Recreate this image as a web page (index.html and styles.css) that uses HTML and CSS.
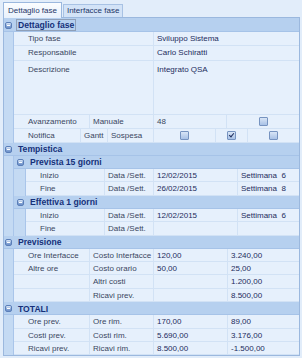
FILE: index.html
```html
<!DOCTYPE html>
<html lang="it">
<head>
    <meta charset="UTF-8">
    <title>Dettaglio fase</title>
    <link rel="stylesheet" href="styles.css">
</head>
<body>
    <div class="tabs">
        <div class="tab active">Dettaglio fase</div>
        <div class="tab">Interfacce fase</div>
    </div>

    <div class="grid">
        <!-- Dettaglio fase -->
        <div class="ghead first"><span class="toggle"></span><span class="gtitle focus">Dettaglio fase</span></div>
        <div class="gbody">
            <div class="strip"></div>
            <div class="rows">
                <div class="row h14"><div class="cell lbl" style="width:140px">Tipo fase</div><div class="cell grow">Sviluppo Sistema</div></div>
                <div class="row h15"><div class="cell lbl" style="width:140px">Responsabile</div><div class="cell grow">Carlo Schiratti</div></div>
                <div class="row tall"><div class="cell lbl" style="width:140px">Descrizione</div><div class="cell grow">Integrato QSA</div></div>
                <div class="row h14">
                    <div class="cell lbl" style="width:76px">Avanzamento</div>
                    <div class="cell" style="width:64px">Manuale</div>
                    <div class="cell" style="width:73px">48</div>
                    <div class="cell grow center"><span class="check"></span></div>
                </div>
                <div class="row h135">
                    <div class="cell lbl" style="width:67px">Notifica</div>
                    <div class="cell" style="width:27px">Gantt</div>
                    <div class="cell" style="width:46px">Sospesa</div>
                    <div class="cell center" style="width:62px"><span class="check"></span></div>
                    <div class="cell center" style="width:32px"><span class="check on"></span></div>
                    <div class="cell grow center"><span class="check"></span></div>
                </div>
            </div>
        </div>

        <!-- Tempistica -->
        <div class="ghead"><span class="toggle"></span><span class="gtitle">Tempistica</span></div>
        <div class="gbody">
            <div class="strip"></div>
            <div class="rows">
                <div class="ghead sub"><span class="toggle"></span><span class="gtitle">Prevista 15 giorni</span></div>
                <div class="gbody">
                    <div class="strip sub"></div>
                    <div class="rows">
                        <div class="row">
                            <div class="cell lbl" style="width:79px">Inizio</div>
                            <div class="cell" style="width:49px">Data /Sett.</div>
                            <div class="cell val" style="width:84px">12/02/2015</div>
                            <div class="cell val grow">Settimana&nbsp; 6</div>
                        </div>
                        <div class="row">
                            <div class="cell lbl" style="width:79px">Fine</div>
                            <div class="cell" style="width:49px">Data /Sett.</div>
                            <div class="cell val" style="width:84px">26/02/2015</div>
                            <div class="cell val grow">Settimana&nbsp; 8</div>
                        </div>
                    </div>
                </div>
                <div class="ghead sub"><span class="toggle"></span><span class="gtitle">Effettiva 1 giorni</span></div>
                <div class="gbody">
                    <div class="strip sub"></div>
                    <div class="rows">
                        <div class="row">
                            <div class="cell lbl" style="width:79px">Inizio</div>
                            <div class="cell" style="width:49px">Data /Sett.</div>
                            <div class="cell val" style="width:84px">12/02/2015</div>
                            <div class="cell val grow">Settimana&nbsp; 6</div>
                        </div>
                        <div class="row">
                            <div class="cell lbl" style="width:79px">Fine</div>
                            <div class="cell" style="width:49px">Data /Sett.</div>
                            <div class="cell val" style="width:84px"></div>
                            <div class="cell val grow"></div>
                        </div>
                    </div>
                </div>
            </div>
        </div>

        <!-- Previsione -->
        <div class="ghead"><span class="toggle"></span><span class="gtitle">Previsione</span></div>
        <div class="gbody">
            <div class="strip"></div>
            <div class="rows">
                <div class="row">
                    <div class="cell lbl" style="width:76px">Ore Interfacce</div>
                    <div class="cell" style="width:64px">Costo Interfacce</div>
                    <div class="cell val" style="width:74px">120,00</div>
                    <div class="cell val grow">3.240,00</div>
                </div>
                <div class="row">
                    <div class="cell lbl" style="width:76px">Altre ore</div>
                    <div class="cell" style="width:64px">Costo orario</div>
                    <div class="cell val" style="width:74px">50,00</div>
                    <div class="cell val grow">25,00</div>
                </div>
                <div class="row">
                    <div class="cell lbl" style="width:76px"></div>
                    <div class="cell" style="width:64px">Altri costi</div>
                    <div class="cell val" style="width:74px"></div>
                    <div class="cell val grow">1.200,00</div>
                </div>
                <div class="row">
                    <div class="cell lbl" style="width:76px"></div>
                    <div class="cell" style="width:64px">Ricavi prev.</div>
                    <div class="cell val" style="width:74px"></div>
                    <div class="cell val grow">8.500,00</div>
                </div>
            </div>
        </div>

        <!-- Totali -->
        <div class="ghead"><span class="toggle"></span><span class="gtitle">TOTALI</span></div>
        <div class="gbody">
            <div class="strip"></div>
            <div class="rows">
                <div class="row">
                    <div class="cell lbl" style="width:76px">Ore prev.</div>
                    <div class="cell" style="width:64px">Ore rim.</div>
                    <div class="cell val" style="width:74px">170,00</div>
                    <div class="cell val grow">89,00</div>
                </div>
                <div class="row">
                    <div class="cell lbl" style="width:76px">Costi prev.</div>
                    <div class="cell" style="width:64px">Costi rim.</div>
                    <div class="cell val" style="width:74px">5.690,00</div>
                    <div class="cell val grow">3.176,00</div>
                </div>
                <div class="row">
                    <div class="cell lbl" style="width:76px">Ricavi prev.</div>
                    <div class="cell" style="width:64px">Ricavi rim.</div>
                    <div class="cell val" style="width:74px">8.500,00</div>
                    <div class="cell val grow">-1.500,00</div>
                </div>
            </div>
        </div>
    </div>
</body>
</html>
```

FILE: styles.css
```css
body {
    margin: 0;
    background: #e2edfa;
    font-family: "Liberation Sans", Arial, sans-serif;
    font-size: 8px;
    color: #3a4660;
}

.tabs {
    display: flex;
    align-items: flex-end;
    height: 17px;
    padding-left: 3px;
}

.tab {
    height: 12px;
    line-height: 12px;
    padding: 0 3px;
    margin-right: 1px;
    border: 1px solid #a8c2e4;
    border-bottom: none;
    background: #d3e3f7;
    color: #1e3566;
    font-size: 8px;
}

.tab.active {
    height: 15px;
    line-height: 15px;
    padding: 0 4px;
    background: linear-gradient(#fbfdff, #e8f1fc);
    border-color: #9bb8de;
    position: relative;
    top: 1px;
}

.grid {
    width: 295px;
    margin-left: 3px;
    border: 1px solid #9bb8de;
    background: #e6f0fc;
}

.ghead {
    display: flex;
    align-items: center;
    height: 13.3px;
    padding-top: 1px;
    background: #b6d0ef;
    border-bottom: 1px solid #a6c3e8;
    box-sizing: border-box;
}

.ghead.first {
    height: 14px;
}

.toggle {
    width: 7px;
    height: 7px;
    margin: 0 4px 0 1px;
    border-radius: 2px;
    background: linear-gradient(#dce8f8, #86a6d6 60%, #6d90c8);
    border: 1px solid #5a7eb8;
    box-sizing: border-box;
    position: relative;
}

.toggle::after {
    content: '';
    position: absolute;
    left: 1px;
    right: 1px;
    top: 2px;
    height: 1px;
    background: #ffffff;
}

.ghead.sub .toggle {
    margin-left: 3px;
}

.gtitle {
    font-weight: bold;
    font-size: 8.6px;
    color: #15307a;
    line-height: 10px;
    padding: 0 1px;
    border: 1px solid transparent;
}

.gtitle.focus {
    border-color: #8e9fb8;
}

.gbody {
    display: flex;
}

.strip {
    width: 10px;
    flex: none;
    background: #c4daf3;
    border-right: 1px solid #a9c5ea;
    box-sizing: border-box;
}

.strip.sub {
    width: 12px;
}

.rows {
    flex: 1;
    display: flex;
    flex-direction: column;
}

.row {
    display: flex;
    height: 13.3px;
    border-bottom: 1px solid #d2e2f5;
    box-sizing: border-box;
}

.row.h14 {
    height: 14px;
}

.row.h15 {
    height: 15px;
}

.row.h135 {
    height: 13.5px;
}

.row.tall {
    height: 54px;
}

.cell {
    flex: none;
    box-sizing: border-box;
    padding: 1px 0 0 3px;
    line-height: 12px;
    border-right: 1px solid #d2e2f5;
    white-space: nowrap;
    overflow: hidden;
}

.row.tall .cell {
    padding-top: 3px;
}

.cell.lbl {
    padding-left: 14px;
}

.cell.grow {
    flex: 1;
    border-right: none;
}

.cell.val,
.cell.grow {
    color: #1d2c5c;
}

.cell.center {
    display: flex;
    align-items: center;
    justify-content: center;
    padding: 0;
}

.check {
    width: 9px;
    height: 9px;
    border: 1px solid #7693c0;
    border-radius: 1px;
    background: linear-gradient(#d8e5f6, #a8c1e6);
    box-sizing: border-box;
    position: relative;
}

.check.on::after {
    content: '';
    position: absolute;
    left: 2px;
    top: 0;
    width: 2px;
    height: 4px;
    border-right: 1.5px solid #1d2c5c;
    border-bottom: 1.5px solid #1d2c5c;
    transform: rotate(40deg);
}
```
